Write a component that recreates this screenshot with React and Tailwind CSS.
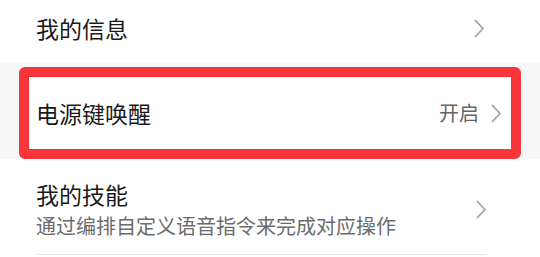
const Chevron = () => (
  <svg width="11" height="19" viewBox="0 0 11 19" fill="none" className="shrink-0">
    <path d="M1.5 1.5 L9 9.5 L1.5 17.5" stroke="#a3a3a3" strokeWidth="1.8" strokeLinecap="round" strokeLinejoin="round" />
  </svg>
);

export default function App() {
  return (
    <div
      className="w-[540px] h-[257px] bg-white overflow-hidden text-[#1a1a1a]"
      style={{ fontFamily: '"Noto Sans CJK SC", "Noto Sans", sans-serif' }}
    >
      {/* 我的信息 */}
      <div className="h-[62px] flex items-center justify-between pl-[36px] pr-[55px] pb-[6px]">
        <span className="text-[23px] leading-[30px]">我的信息</span>
        <Chevron />
      </div>

      {/* 电源键唤醒 (highlighted) */}
      <div className="bg-[#f7f7f7] pt-[5px] px-[19px]">
        <div className="h-[92px] border-[10px] border-[#f83538] rounded-[6px] bg-white flex items-center justify-between pl-[7px] pr-[9px]">
          <span className="text-[23px] leading-[30px]">电源键唤醒</span>
          <div className="flex items-center gap-[12px]">
            <span className="text-[20px] leading-[28px] text-[#666666]">开启</span>
            <Chevron />
          </div>
        </div>
      </div>

      {/* 我的技能 */}
      <div className="pl-[36px] pr-[55px]">
        <div className="flex items-center justify-between pt-[20px] pb-[14px] border-b border-[#e6e6e6] mr-[-2px]">
          <div className="flex flex-col">
            <span className="text-[23px] leading-[30px]">我的技能</span>
            <span className="text-[20px] leading-[28px] text-[#6b6b6b] mt-[3px]">通过编排自定义语音指令来完成对应操作</span>
          </div>
          <Chevron />
        </div>
      </div>
    </div>
  );
}
